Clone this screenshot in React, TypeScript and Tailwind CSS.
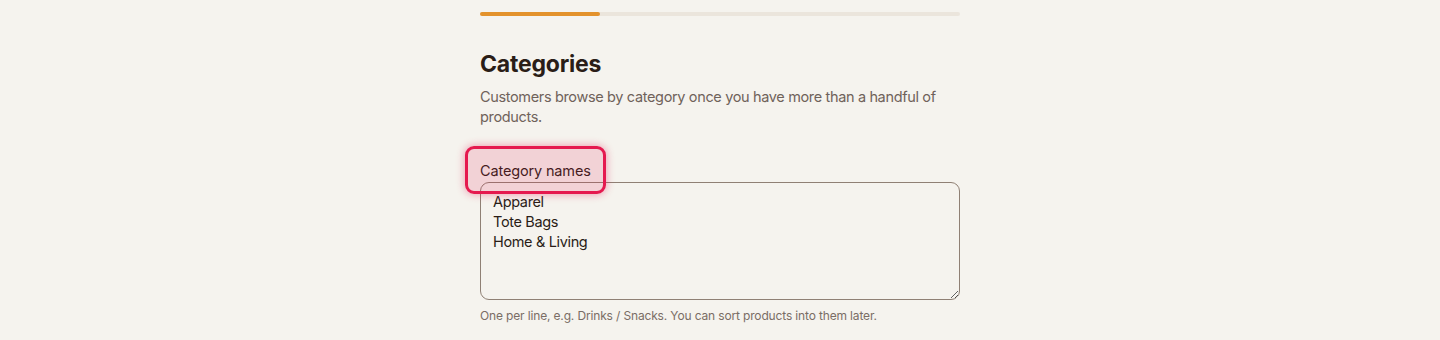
import { useState } from "react";

// Etapa del asistente: categorías
export default function App() {
  const [names, setNames] = useState("Apparel\nTote Bags\nHome & Living");

  return (
    <div
      className="min-h-[340px] w-full bg-[#f5f3ee] text-[#2a1f1a]"
      style={{ fontFamily: "Inter, 'Noto Sans', sans-serif" }}
    >
      <div className="mx-auto w-[480px] pt-[12px]">
        {/* barra de progreso */}
        <div className="h-[4px] w-full rounded-full bg-[#ebe5dc]">
          <div className="h-full w-1/4 rounded-full bg-[#e3922c]" />
        </div>

        <h1 className="mt-[33px] text-[23px] font-bold leading-[30px] tracking-[-0.2px] text-[#2a1d17]">
          Categories
        </h1>
        <p className="mt-[8px] text-[14.5px] leading-[20px] tracking-[-0.35px] text-[#6f625a]">
          Customers browse by category once you have more than a handful of
          products.
        </p>

        <div className="relative mt-[34px]">
          <label className="block text-[14.5px] leading-[20px] tracking-[-0.15px] text-[#2a1d17]">
            Category names
          </label>
          {/* resaltado del campo */}
          <div className="pointer-events-none absolute left-[-15px] top-[-15px] h-[48px] w-[141px] rounded-[9px] border-[3px] border-[#e5194f] bg-[#e5194f]/15 shadow-[0_0_8px_rgba(229,25,79,0.45)]" />
          <textarea
            value={names}
            onChange={(e) => setNames(e.target.value)}
            className="mt-[1px] block h-[118px] w-full rounded-[9px] border border-[#8f8074] bg-transparent px-[12px] py-[9px] text-[14.5px] leading-[20px] tracking-[-0.35px] text-[#2a1d17] outline-none"
          />
          <p className="mt-[8px] text-[12px] leading-[16px] tracking-[-0.15px] text-[#7a6d65]">
            One per line, e.g. Drinks / Snacks. You can sort products into them
            later.
          </p>
        </div>
      </div>
    </div>
  );
}
